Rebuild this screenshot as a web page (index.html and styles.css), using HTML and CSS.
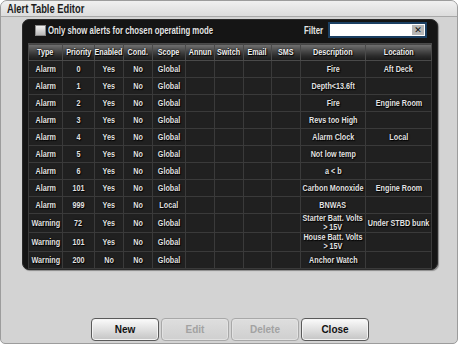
FILE: index.html
```html
<!DOCTYPE html>
<html>
<head>
    <title>Alert Table Editor</title>
    <link rel="stylesheet" href="styles.css">
</head>
<body>
    <div class="dialog">
        <div class="titlebar"><span class="narrow">Alert Table Editor</span></div>
        <div class="content">
            <div class="panel">
                <div class="toolbar">
                    <label class="mode-check">
                        <span class="checkbox"></span>
                        <span class="narrow">Only show alerts for chosen operating mode</span>
                    </label>
                    <div class="filter">
                        <span class="filter-label"><span class="narrow">Filter</span></span>
                        <div class="filter-box">
                            <input type="text" class="filter-input">
                            <span class="filter-clear">&#x2715;</span>
                        </div>
                    </div>
                </div>
                <table class="alerts">
                    <colgroup>
                        <col style="width:34px"><col style="width:32px"><col style="width:29px">
                        <col style="width:29px"><col style="width:33px"><col style="width:29px">
                        <col style="width:29px"><col style="width:28px"><col style="width:29px">
                        <col style="width:65px"><col style="width:66px">
                    </colgroup>
                    <thead>
                        <tr>
                            <th><span>Type</span></th><th><span>Priority</span></th><th><span>Enabled</span></th>
                            <th><span>Cond.</span></th><th><span>Scope</span></th><th><span>Annun</span></th>
                            <th><span>Switch</span></th><th><span>Email</span></th><th><span>SMS</span></th>
                            <th><span>Description</span></th><th><span>Location</span></th>
                        </tr>
                    </thead>
                    <tbody>
                        <tr><td><span>Alarm</span></td><td><span>0</span></td><td><span>Yes</span></td><td><span>No</span></td><td><span>Global</span></td><td></td><td></td><td></td><td></td><td><span>Fire</span></td><td><span>Aft Deck</span></td></tr>
                        <tr><td><span>Alarm</span></td><td><span>1</span></td><td><span>Yes</span></td><td><span>No</span></td><td><span>Global</span></td><td></td><td></td><td></td><td></td><td><span>Depth&lt;13.6ft</span></td><td></td></tr>
                        <tr><td><span>Alarm</span></td><td><span>2</span></td><td><span>Yes</span></td><td><span>No</span></td><td><span>Global</span></td><td></td><td></td><td></td><td></td><td><span>Fire</span></td><td><span>Engine Room</span></td></tr>
                        <tr><td><span>Alarm</span></td><td><span>3</span></td><td><span>Yes</span></td><td><span>No</span></td><td><span>Global</span></td><td></td><td></td><td></td><td></td><td><span>Revs too High</span></td><td></td></tr>
                        <tr><td><span>Alarm</span></td><td><span>4</span></td><td><span>Yes</span></td><td><span>No</span></td><td><span>Global</span></td><td></td><td></td><td></td><td></td><td><span>Alarm Clock</span></td><td><span>Local</span></td></tr>
                        <tr><td><span>Alarm</span></td><td><span>5</span></td><td><span>Yes</span></td><td><span>No</span></td><td><span>Global</span></td><td></td><td></td><td></td><td></td><td><span>Not low temp</span></td><td></td></tr>
                        <tr><td><span>Alarm</span></td><td><span>6</span></td><td><span>Yes</span></td><td><span>No</span></td><td><span>Global</span></td><td></td><td></td><td></td><td></td><td><span>a &lt; b</span></td><td></td></tr>
                        <tr><td><span>Alarm</span></td><td><span>101</span></td><td><span>Yes</span></td><td><span>No</span></td><td><span>Global</span></td><td></td><td></td><td></td><td></td><td><span>Carbon Monoxide</span></td><td><span>Engine Room</span></td></tr>
                        <tr><td><span>Alarm</span></td><td><span>999</span></td><td><span>Yes</span></td><td><span>No</span></td><td><span>Local</span></td><td></td><td></td><td></td><td></td><td><span>BNWAS</span></td><td></td></tr>
                        <tr><td><span>Warning</span></td><td><span>72</span></td><td><span>Yes</span></td><td><span>No</span></td><td><span>Global</span></td><td></td><td></td><td></td><td></td><td><span>Starter Batt. Volts<br>&gt; 15V</span></td><td><span>Under STBD bunk</span></td></tr>
                        <tr><td><span>Warning</span></td><td><span>101</span></td><td><span>Yes</span></td><td><span>No</span></td><td><span>Global</span></td><td></td><td></td><td></td><td></td><td><span>House Batt. Volts<br>&gt; 15V</span></td><td></td></tr>
                        <tr><td><span>Warning</span></td><td><span>200</span></td><td><span>No</span></td><td><span>No</span></td><td><span>Global</span></td><td></td><td></td><td></td><td></td><td><span>Anchor Watch</span></td><td></td></tr>
                    </tbody>
                </table>
            </div>
            <div class="buttons">
                <button class="btn">New</button>
                <button class="btn" disabled>Edit</button>
                <button class="btn" disabled>Delete</button>
                <button class="btn">Close</button>
            </div>
        </div>
    </div>
</body>
</html>
```

FILE: styles.css
```css
html, body {
    margin: 0;
    padding: 0;
    background-color: #ffffff;
}

body {
    font-family: "Liberation Sans", Arial, sans-serif;
    font-weight: bold;
}

/* the original UI font is a condensed Helvetica */
.narrow {
    display: inline-block;
    transform: scaleX(0.78);
    transform-origin: left center;
    white-space: nowrap;
}

.dialog {
    width: 458px;
    height: 344px;
    box-sizing: border-box;
    border: 1px solid #9c9c9c;
    border-radius: 7px 7px 5px 5px;
    background-color: #d3d3d3;
    display: flex;
    flex-direction: column;
    overflow: hidden;
}

.titlebar {
    height: 15px;
    line-height: 16px;
    padding-left: 6px;
    font-size: 12px;
    color: #1c1c1c;
    background: linear-gradient(#f0f0f0, #dcdcdc);
    border-bottom: 1px solid #a8a8a8;
}

.content {
    flex: 1;
    padding: 2px 19px 0 21px;
    display: flex;
    flex-direction: column;
}

.panel {
    height: 251px;
    box-sizing: border-box;
    background-color: #151515;
    border: 1px solid #2a2a2a;
    border-radius: 7px;
    padding: 3px 5px 0 5px;
    box-shadow: 1px 1px 1px #8a8a8a;
}

.toolbar {
    display: flex;
    align-items: center;
    justify-content: space-between;
    height: 14px;
    padding: 0 5px 0 7px;
    margin-bottom: 6px;
}

.mode-check {
    display: flex;
    align-items: center;
    gap: 2px;
    font-size: 10px;
    color: #e4e4e4;
    text-shadow: 1px 1px 1px #000000;
}

.checkbox {
    width: 9px;
    height: 9px;
    border: 1px solid #8a8a8a;
    background: linear-gradient(#f2f2f2, #b8b8b8);
}

.filter {
    display: flex;
    align-items: center;
}

.filter-label {
    width: 24px;
    font-size: 10px;
    color: #e4e4e4;
}

.filter-box {
    width: 94px;
    height: 12px;
    background-color: #ffffff;
    border: 2px solid #1b3f62;
    display: flex;
    align-items: center;
    justify-content: flex-end;
    padding-right: 1px;
}

.filter-input {
    flex: 1;
    min-width: 0;
    height: 10px;
    border: none;
    padding: 0;
    outline: none;
}

.filter-clear {
    width: 12px;
    height: 10px;
    background-color: #b6b6b6;
    color: #111111;
    font-family: "DejaVu Sans", sans-serif;
    font-size: 9px;
    line-height: 10px;
    text-align: center;
}

.alerts {
    width: 404px;
    table-layout: fixed;
    border-collapse: collapse;
    font-size: 9px;
    color: #e2e2e2;
    text-shadow: 0 0 2px #000000, 1px 1px 1px #000000;
}

.alerts th,
.alerts td {
    height: 16px;
    padding: 0;
    text-align: center;
    white-space: nowrap;
    border: 1px solid #3a3a3a;
    line-height: 9px;
}

.alerts th span,
.alerts td span {
    display: inline-block;
    margin: 0 -15px;
    transform: scaleX(0.8);
}

.alerts th {
    background: linear-gradient(#727272, #2c2c2c 70%, #1a1a1a);
    border-color: #4a4a4a;
    color: #f0f0f0;
}

.alerts td {
    background-color: #202020;
}

.buttons {
    margin-top: auto;
    margin-bottom: 2px;
    display: flex;
    justify-content: center;
    gap: 2px;
}

.btn {
    width: 68px;
    height: 23px;
    font-family: "Liberation Sans", Arial, sans-serif;
    font-weight: bold;
    font-size: 10px;
    color: #111111;
    background: linear-gradient(#fbfbfb, #e0e0e0 50%, #c4c4c4);
    border: 1px solid #5a5a5a;
    border-radius: 4px;
    box-shadow: inset 0 0 0 1px #f4f4f4;
    padding: 0;
}

.btn:disabled {
    color: #a2a2a2;
    background: linear-gradient(#dedede, #cfcfcf);
    border-color: #a8a8a8;
    box-shadow: inset 0 0 0 1px #e2e2e2;
}
```
